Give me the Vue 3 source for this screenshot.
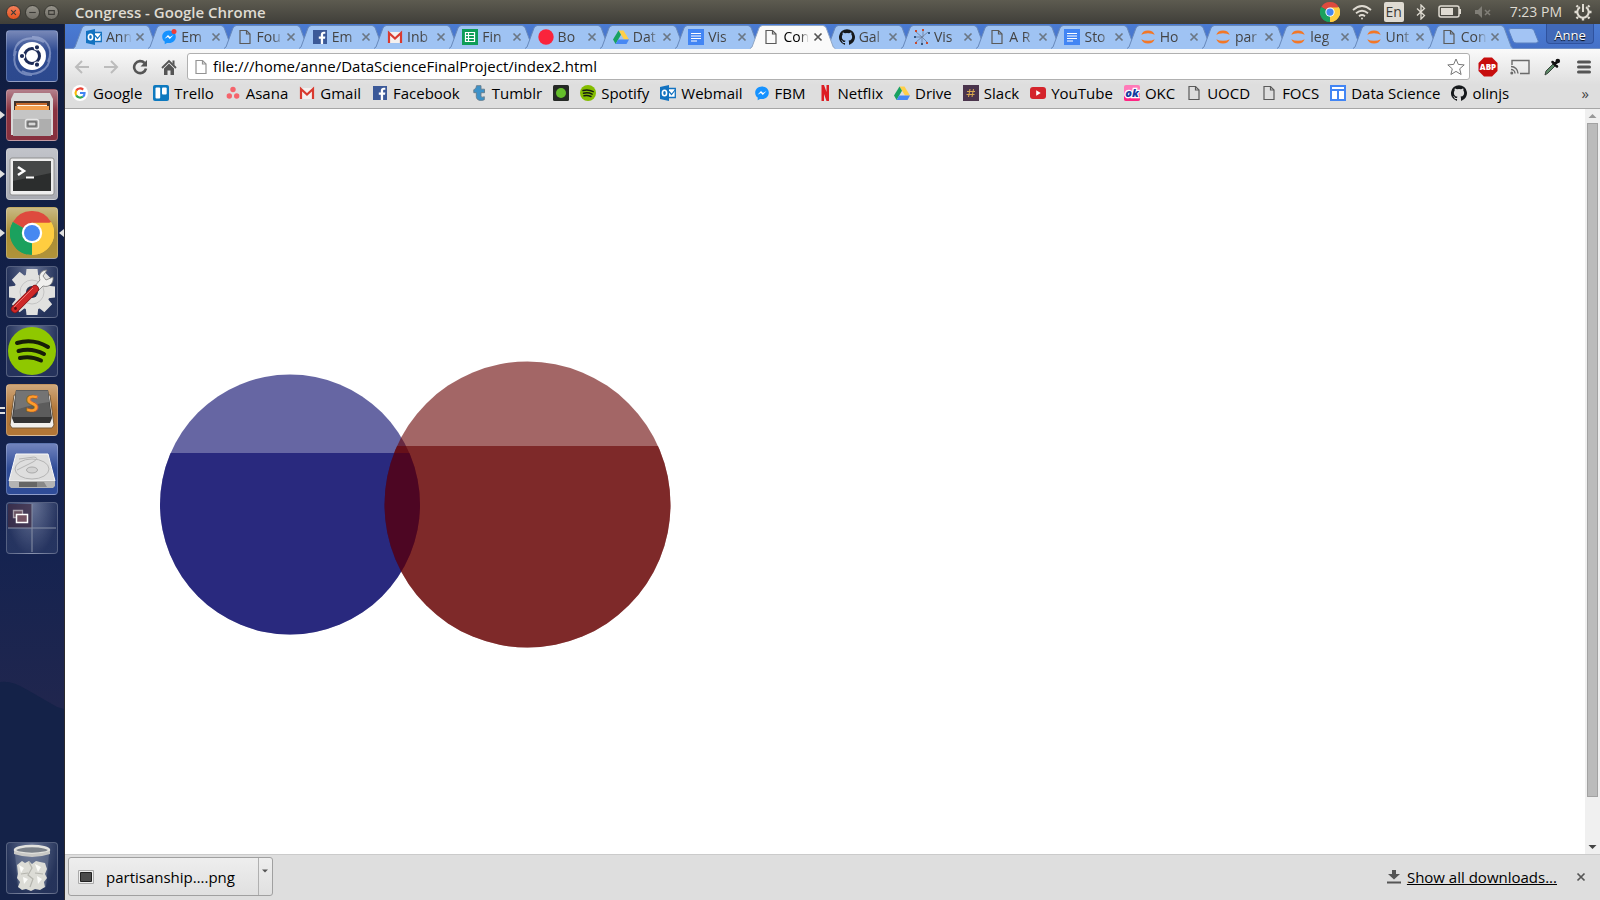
<script setup>
import { ref } from 'vue'

const page = '<path d="M3 1.5h6.500l3.500 3.500v9.500h-10z" fill="none" stroke="#5a5a5a" stroke-width="1.200"/><path d="M9.500 1.500v3.500h3.500" fill="none" stroke="#5a5a5a" stroke-width="1.200"/>'
const github = '<path fill="#16191c" d="M8 .2a8 8 0 0 0-2.530 15.600c.4.070.55-.18.55-.39v-1.500c-2.230.49-2.700-.95-2.700-.95-.36-.93-.89-1.170-.89-1.170-.73-.5.060-.49.060-.49.800.060 1.230.830 1.230.83.710 1.220 1.870.870 2.330.66.070-.52.280-.87.500-1.070-1.770-.2-3.640-.89-3.640-3.950 0-.87.310-1.590.82-2.150-.08-.2-.36-1.010.080-2.120 0 0 .67-.210 2.200.82a7.600 7.600 0 0 1 4 0c1.530-1.030 2.200-.82 2.200-.82.440 1.110.160 1.920.080 2.120.51.560.82 1.280.82 2.150 0 3.070-1.870 3.750-3.650 3.950.290.250.540.730.54 1.480v2.200c0 .21.150.460.55.38A8 8 0 0 0 8 .2z"/>'
const gmail = '<path d="M1 3h14v11h-14z" fill="#f4f0ef"/><path d="M2 14v-10l6 5.500 6-5.500v10" fill="none" stroke="#d93a2f" stroke-width="2.200"/>'
const facebook = '<rect x="1" y="1" width="14" height="14" fill="#3b5998"/><path d="M8.800 15v-5.300h-2v-2.200h2v-1.700c0-2 1.200-3 3-3h1.500v2h-1c-1 0-1.200.5-1.200 1.200v1.500h2.200l-.3 2.200h-1.900v5.300z" fill="#fff"/>'
const outlook = '<path d="M8 3.500h7.300v9h-7.300z" fill="#fff" stroke="#1272c0" stroke-width="1.300"/><path d="M9 6.500l2.500 3 4-5" fill="none" stroke="#1272c0" stroke-width="1.200"/><path d="M0 2l9-2v16l-9-2z" fill="#1272c0"/><ellipse cx="4.500" cy="8" rx="2.100" ry="2.800" fill="none" stroke="#fff" stroke-width="1.600"/>'
const messenger = '<path d="M8 1.500c-4 0-6.800 2.800-6.800 6.200 0 2 .9 3.700 2.500 4.900v2.600l2.300-1.300c.6.100 1.300.2 2 .2 4 0 6.800-2.800 6.800-6.300s-2.800-6.300-6.800-6.300z" fill="#1592ff"/><path d="M3.500 9.700l3.500-3.700 2 1.900 3.500-1.900-3.700 3.900-1.900-1.900z" fill="#fff"/>'
const drive = '<path d="M5.500 1.500h5l5.500 9h-5z" fill="#ffcf48"/><path d="M5.500 1.500l2.500 4.300-5.400 9.200-2.600-4.500z" fill="#18a261"/><path d="M5.200 10.500h10.800l-2.500 4.500h-10.900z" fill="#4688f4"/>'
const docs = '<rect width="16" height="16" fill="#4285f4"/><path d="M3 4.500h10M3 7h10M3 9.500h10M3 12h6" stroke="#fff" stroke-width="1.200"/>'
const jupyter = '<path d="M1.300 5.800a7 6 0 0 1 13.400 0 8.500 4 0 0 0-13.400 0zM1.300 10.300a7 6 0 0 0 13.400 0 8.500 4 0 0 1-13.400 0z" fill="#f37726"/>'
const spotify = '<circle cx="8" cy="8" r="8" fill="#84bd00"/><path d="M3 5.500c3.500-1 7-.6 10.200 1.100M3.500 8.200c3-.8 5.800-.5 8.600.9M4 10.700c2.500-.6 4.800-.3 7 .8" fill="none" stroke="#161e10" stroke-width="1.500" stroke-linecap="round"/>'
const chrome = '<path d="M8 8L1.070 4A8 8 0 0 1 14.930 4z" fill="#de4a3e"/><path d="M8 8L14.930 4A8 8 0 0 1 8 16z" fill="#ffcd40"/><path d="M8 8V16A8 8 0 0 1 1.070 4z" fill="#1ba15e"/><path d="M8 4.300h7.100a8 8 0 0 1 .2 7l-4-1.400z" fill="#ffcd40"/><path d="M1.070 4l3.700 6 3.300 1.700-1.900 4.100a8 8 0 0 1-5.100-11.800z" fill="#1ba15e"/><path d="M11.300 9.500l-3.400 6.500a8 8 0 0 0 8-6.500z" fill="#ffcd40"/><circle cx="8" cy="8" r="3.700" fill="#fff"/><circle cx="8" cy="8" r="2.900" fill="#4688f1"/>'

const icons = {
  page, github, gmail, facebook, outlook, messenger, drive, docs, jupyter, spotify, chrome,
  messengerNew: messenger + '<circle cx="13" cy="2.500" r="2.500" fill="#f03d35"/>',
  sheets: '<rect width="16" height="16" fill="#0f9d58"/><path d="M3.500 3.500h9v9h-9zM3.500 6.500h9M3.500 9.500h9M6.500 3.500v9" fill="none" stroke="#fff" stroke-width="1.200"/>',
  red: '<circle cx="8" cy="8" r="7.700" fill="#fa243c"/>',
  network: '<path d="M8 8L2 3M8 8l6-5M8 8l-6 5M8 8l5 5M9 8V1M8 8v6M8 8H1" stroke="#66738c" stroke-width=".7"/><g fill="#c8492d"><path d="M1 1h2v2H1zM8 0h2v2H8zM1 13h2v2H1zM12 13h2v2h-2z"/></g><g fill="#36577f"><path d="M14 3h2v2h-2zM7 14h2v2H7zM0 7h2v2H0z"/></g>',
  google: '<circle cx="8" cy="8" r="8" fill="#fff"/><g fill="none" stroke-width="2.100"><path d="M4.200 5.600a4.600 4.600 0 0 1 7-1" stroke="#ea4335"/><path d="M4.200 5.600a4.800 4.800 0 0 0 0 4.800" stroke="#fbbc05"/><path d="M4.200 10.400a4.600 4.600 0 0 0 6.700 1.300" stroke="#34a853"/><path d="M8 8h4.600a4.600 4.600 0 0 1-1.700 3.700" stroke="#4285f4"/></g>',
  trello: '<rect width="16" height="16" rx="2" fill="#0d79bf"/><rect x="2.500" y="2.500" width="4.700" height="11" rx="1" fill="#fff"/><rect x="9" y="2.500" width="4.700" height="7" rx="1" fill="#fff"/>',
  asana: '<g fill="#f5646c"><circle cx="8" cy="4.500" r="2.700"/><circle cx="4.300" cy="11" r="2.700"/><circle cx="11.700" cy="11" r="2.700"/></g>',
  tumblr: '<path d="M5.500.7h4.500v3.500h3.500v3.500h-3.500v3c0 1.800 1.500 1.800 3.300 1v3c-3.300 1.500-8 .8-8-3.200v-3.800h-2.500v-3c1.700-.7 2.500-1.800 2.700-4z" fill="#3d92c9" stroke="#617b8c" stroke-width=".9"/>',
  green: '<rect width="16" height="16" rx="1.500" fill="#252925"/><circle cx="8" cy="8" r="5" fill="#64be2a"/>',
  netflix: '<path d="M4.500 0h2.500l2.500 7V0H12v16H9.500L7 9v7H4.500z" fill="#dd1d23"/>',
  slack: '<rect width="16" height="16" fill="#4a344c"/><path d="M7 4l-1.500 8M10.500 4l-1.500 8M4 6.500h8M3.500 9.500h8" stroke="#d8a84f" stroke-width="1"/>',
  youtube: '<rect y="2" width="16" height="12" rx="3" fill="#d4232b"/><path d="M6.200 5.200l4.500 2.800-4.500 2.800z" fill="#fff"/>',
  okc: '<rect width="16" height="16" rx="2" fill="#ff7ab8"/><path d="M0 11h16v3a2 2 0 0 1-2 2H2a2 2 0 0 1-2-2z" fill="#ff2583"/><text x="8" y="12" text-anchor="middle" font-family="Open Sans" font-size="11" font-style="italic" font-weight="800" fill="#173da0" stroke="#fff" stroke-width="2.500" paint-order="stroke">ok</text>',
  table: '<rect width="16" height="16" fill="#4285f4"/><path d="M2 2h12v2H2zM2 6h5v8H2zM9 6h5v8H9z" fill="#fff"/>',
}

const tabs = [
  ['outlook', 'Ann'], ['messengerNew', 'Em'], ['page', 'Fou'], ['facebook', 'Em'], ['gmail', 'Inb'],
  ['sheets', 'Fin'], ['red', 'Bo'], ['drive', 'Dat'], ['docs', 'Vis'], ['page', 'Con'],
  ['github', 'Gal'], ['network', 'Vis'], ['page', 'A R'], ['docs', 'Sto'], ['jupyter', 'Ho'],
  ['jupyter', 'par'], ['jupyter', 'leg'], ['jupyter', 'Unt'], ['page', 'Con'],
]
const activeTab = ref(9)

const bookmarks = [
  ['google', 'Google'], ['trello', 'Trello'], ['asana', 'Asana'], ['gmail', 'Gmail'], ['facebook', 'Facebook'],
  ['tumblr', 'Tumblr'], ['green', ''], ['spotify', 'Spotify'], ['outlook', 'Webmail'], ['messenger', 'FBM'],
  ['netflix', 'Netflix'], ['drive', 'Drive'], ['slack', 'Slack'], ['youtube', 'YouTube'], ['okc', 'OKC'],
  ['page', 'UOCD'], ['page', 'FOCS'], ['table', 'Data Science'], ['github', 'olinjs'],
]

const cogTooth = 'M20.500 3h11l1 9H19.500zM20.500 49h11l1-9H19.500z'
const art = {
  dash: '<g fill="none" stroke="#b9c6e8" opacity=".5"><path d="M8 26C8 10 22 4 38 12M44 26c0 15-16 22-28 15M26 7c14-1 22 12 16 25M26 45C12 46 5 34 10 21" stroke-width="2"/></g><circle cx="26" cy="26" r="14" fill="#fff"/><circle cx="26" cy="26" r="7.500" fill="none" stroke="#1c2b57" stroke-width="3"/><g fill="#1c2b57" stroke="#fff" stroke-width="1.200"><circle cx="16" cy="26" r="2.700"/><circle cx="31" cy="17.300" r="2.700"/><circle cx="31" cy="34.700" r="2.700"/></g>',
  files: '<path d="M8 4h36l3 6v36H5V10z" fill="#d9d9d9"/><path d="M8 12h36v12H8z" fill="#40332c"/><path d="M10 14h31v8H10z" fill="#c56a2c"/><path d="M9 17h34v7H9z" fill="#f3a04f"/><path d="M11 16.500h30" stroke="#fff4e6"/><path d="M7 21h38v26H7z" fill="#aeaeae"/><path d="M7 21h38v9H7z" fill="#c5c5c5"/><rect x="19.500" y="30.500" width="13" height="9" rx="2" fill="#999" stroke="#e6e6e6" stroke-width="1.500"/><rect x="22" y="33" width="8" height="4" fill="#d8d8d8" stroke="#555"/>',
  terminal: '<rect x="4" y="10" width="44" height="37" rx="2" fill="#eee" stroke="#8e8e8e"/><rect x="7" y="13" width="38" height="30" fill="#2b2d2d"/><path d="M7 13h38v12l-38 8z" fill="#454747"/><path d="M12 19l6 4-6 4" fill="none" stroke="#fff" stroke-width="2.500"/><path d="M20 29.500h8" stroke="#fff" stroke-width="2"/>',
  chrome: '<svg x="4" y="4" width="44" height="44" viewBox="0 0 16 16">' + chrome + '</svg>',
  settings: `<g fill="#e1e1df"><circle cx="26" cy="26" r="18"/><path d="${cogTooth}"/><path d="${cogTooth}" transform="rotate(45 26 26)"/><path d="${cogTooth}" transform="rotate(90 26 26)"/><path d="${cogTooth}" transform="rotate(135 26 26)"/></g><circle cx="26" cy="26" r="12" fill="none" stroke="#c4c4c4"/><circle cx="26" cy="26" r="6" fill="#273354"/><path d="M28 21l6-7c-2-5 1-10 7-10l-4 6 3 4 7-3c1 6-4 11-10 9l-6 6z" fill="#f0f0ee" stroke="#777" stroke-width=".8"/><path d="M9 43L29 23" stroke="#861616" stroke-width="8" stroke-linecap="round"/><path d="M9 43L29 23" stroke="#ce2828" stroke-width="6.500" stroke-linecap="round"/><path d="M8 41L27 22" stroke="#ed7771" stroke-width="1"/><circle cx="9.500" cy="42.500" r="1.400" fill="#5b0e0e"/>`,
  spotify: '<circle cx="26" cy="26" r="24" fill="#8fc800"/><path d="M11 18c10-3 21-2 31 4M12.500 26c9-2.500 17-1.500 25.500 3M14 33c7-1.500 14-1 21 2.500" fill="none" stroke="#171e08" stroke-width="4" stroke-linecap="round"/>',
  sublime: '<path d="M8 11h36l4 30-2 3H6l-2-3z" fill="#f1efec" stroke="#775a38"/><path d="M10 6h32l4 28-2 5H8l-2-5z" fill="#333"/><path d="M10 6h32l3 27H7z" fill="#5c5c5c"/><path d="M10 7h32l1 11q-15 2-34 8z" fill="#747474"/><text x="26" y="28" text-anchor="middle" font-family="Open Sans" font-size="24" font-weight="700" fill="#ff9b2c" stroke="#9b5518" stroke-width=".5">S</text>',
  disk: '<path d="M10 11h32l7 27H3z" fill="#dedede" stroke="#fafafa"/><path d="M3 38h46v5l-2 2H5l-2-2z" fill="#b4b4b4"/><path d="M13 39h18v5H13z" fill="#666"/><path d="M31 39h7l3 5H31z" fill="#888"/><ellipse cx="26" cy="26" rx="17" ry="10" fill="none" stroke="#b5b5b5"/><ellipse cx="26" cy="27" rx="5.500" ry="3" fill="#d2d2d2" stroke="#aaa"/><path d="M13 16l15-2q6 1-1 5l-16 8" fill="none" stroke="#b5b5b5"/>',
  workspaces: '<path d="M2 2h24v24H2z" fill="#3d2a42" opacity=".7"/><path d="M26 2v48M2 26h48" stroke="#8790a6" stroke-width="1"/><path d="M7.500 8.500h9v7h-9z" fill="#69505f" stroke="#a9a0ab" stroke-width="1.300"/><path d="M10.500 12.500h11v8h-11z" fill="#755363" stroke="#fff" stroke-width="1.500"/>',
  trash: '<path d="M9 12h34l-3 33q-14 5-28 0z" fill="#8f9ab0" opacity=".35"/><g fill="#dcdcd6"><path d="M11 23l5-4 3 2 4-2 3 3 4-3 4 1 5 1 2 6-2 5 2 4-3 4 1 5-5 3-5-1-4 2-5-2-4 1-4-3 2-5-3-4 1-4z"/></g><path d="M13 23l5 3-3 5zM29 22l6 3-3 5zM17 35l5 2-4 5zM31 34l5 3-4 5z" fill="#fbfbf8"/><path d="M23 20l3 6-4 7 5 4-3 8M15 32l7-1M29 31l8 1" fill="none" stroke="#b5b5ae" stroke-width="1.200"/><ellipse cx="26" cy="8" rx="17" ry="4" fill="#7b8189" stroke="#e2e2de" stroke-width="2.500"/><path d="M8 9v3q18 6 36 0V9q-18 6-36 0z" fill="#c9c9c6"/>',
}
const launcher = [
  { id: 'dash', label: 'Dash' },
  { id: 'files', label: 'Files', open: 1 },
  { id: 'terminal', label: 'Terminal', open: 1 },
  { id: 'chrome', label: 'Google Chrome', open: 1, focused: true },
  { id: 'settings', label: 'System Tools' },
  { id: 'spotify', label: 'Spotify' },
  { id: 'sublime', label: 'Sublime Text', open: 2 },
  { id: 'disk', label: 'Disk' },
  { id: 'workspaces', label: 'Workspaces' },
  { id: 'trash', label: 'Trash' },
]

const address = ref('file:///home/anne/DataScienceFinalProject/index2.html')
</script>

<template>
  <div class="desktop">
    <header class="panel">
      <div class="window-buttons">
        <button class="win close" aria-label="Close"><svg viewBox="0 0 14 14"><path d="M4.500 4.500l5 5M9.500 4.500l-5 5" /></svg></button>
        <button class="win" aria-label="Minimize"><svg viewBox="0 0 14 14"><path d="M3.500 7h7" /></svg></button>
        <button class="win" aria-label="Maximize"><svg viewBox="0 0 14 14"><path d="M4 5h6v4H4z" /></svg></button>
      </div>
      <h1 class="window-title">Congress - Google Chrome</h1>
      <div class="indicators">
        <svg class="i20" viewBox="0 0 16 16" v-html="icons.chrome"></svg>
        <svg class="i20" viewBox="0 0 20 20" fill="none" stroke="#dfdbd2" stroke-width="1.800"><path d="M1 8q9-8 18 0M4 11.200q6-5 12 0M7 14.200q3-2.500 6 0" /><circle cx="10" cy="16.500" r="1" fill="#dfdbd2" stroke="none" /></svg>
        <span class="lang">En</span>
        <svg class="bt" viewBox="0 0 10 16" fill="none" stroke="#dfdbd2" stroke-width="1.300"><path d="M1 4.500l7.500 7L5 15V1l3.500 3.500-7.500 7" /></svg>
        <svg class="battery" viewBox="0 0 24 14"><rect x="1" y="1" width="20" height="11" rx="2" fill="none" stroke="#dfdbd2" stroke-width="1.500" /><path d="M3 3h12v7H3z" fill="#dfdbd2" /><path d="M22 4v5" stroke="#dfdbd2" stroke-width="2" /></svg>
        <svg class="mute" viewBox="0 0 18 14"><path d="M1 5h3l4-4v12L4 9H1z" fill="#807e77" /><path d="M11 5l5 5M16 5l-5 5" stroke="#807e77" stroke-width="1.500" /></svg>
        <time class="clock">7:23 PM</time>
        <svg class="gear" viewBox="0 0 18 18" fill="none" stroke="#dfdbd2"><path d="M6 4.200a5.700 5.700 0 1 0 6 0" stroke-width="2" /><path d="M9 1v8" stroke-width="2" /><path d="M4 4L2.500 2.500M14 4l1.500-1.500M.5 9H3M15 9h2.500M4 14l-1.500 1.500M14 14l1.500 1.500M9 15v2.500" stroke-width="2.400" /></svg>
      </div>
    </header>

    <div class="body">
      <nav class="launcher" aria-label="Launcher">
        <svg class="hills" viewBox="0 0 65 220" preserveAspectRatio="none"><path d="M0 2q12-2 28 8l30 17 7 2v191H0z" fill="#142248" /></svg>
        <button v-for="item in launcher" :key="item.id" class="tile" :class="item.id" :aria-label="item.label">
          <svg viewBox="0 0 52 52" v-html="art[item.id]"></svg>
          <i v-if="item.open === 1" class="pip"></i>
          <i v-if="item.open === 2" class="bars"></i>
          <i v-if="item.focused" class="pip right"></i>
        </button>
      </nav>

      <section class="browser">
        <div class="strip">
          <div class="tabs" role="tablist">
            <div v-for="(tab, i) in tabs" :key="i" class="tab" :class="{ active: i === activeTab }">
              <svg class="shape" viewBox="0 0 85 24" preserveAspectRatio="none">
                <path class="fill" d="M0 24L2 22 9 3Q10 1 12 1H73Q75 1 76 3L83 22 85 24z" />
                <path class="edge" d="M0 23.500L2 22 9 3Q10 .5 12 .5H73Q75 .5 76 3L83 22 85 23.500" />
              </svg>
              <button class="tab-main" role="tab" :aria-selected="i === activeTab" @click="activeTab = i">
                <svg class="i16" viewBox="0 0 16 16" v-html="icons[tab[0]]"></svg>
                <span class="tab-text">{{ tab[1] }}</span>
              </button>
              <button class="x" aria-label="Close tab"><svg viewBox="0 0 10 10"><path d="M1.500 1.500l7 7M8.500 1.500l-7 7" /></svg></button>
            </div>
          </div>
          <button class="new-tab" aria-label="New tab"><svg viewBox="0 0 32 16"><path d="M1 3q-1-2.500 2-2.500h20q2 0 3 2l4 10q1 2.500-2 2.500H8q-2 0-3-2z" fill="#a3c4f4" stroke="#5a80c0" /></svg></button>
          <button class="profile">Anne</button>
        </div>

        <div class="chrome">
          <form class="toolbar" @submit.prevent>
            <div class="tools">
              <button aria-label="Back"><svg class="i16" viewBox="0 0 16 16" fill="none" stroke="#bcbcbc" stroke-width="2"><path d="M15 8H2M8 2L2 8l6 6" /></svg></button>
              <button aria-label="Forward"><svg class="i16" viewBox="0 0 16 16" fill="none" stroke="#bcbcbc" stroke-width="2"><path d="M1 8h13M8 2l6 6-6 6" /></svg></button>
              <button aria-label="Reload"><svg class="i16" viewBox="0 0 16 16"><path d="M12.500 4A6 6 0 1 0 14 9.500" fill="none" stroke="#555" stroke-width="2.600" /><path d="M15 1v6.500H8.500z" fill="#555" /></svg></button>
              <button aria-label="Home"><svg class="i16" viewBox="0 0 16 16"><path d="M1 9l7-7 7 7" fill="none" stroke="#555" stroke-width="1.800" /><path d="M3 9.500l5-5 5 5V16H9.500v-4.500h-3V16H3zM11.500 1.500h2v5l-2-2z" fill="#555" /></svg></button>
            </div>
            <div class="omnibox">
              <svg class="i16 pale" viewBox="0 0 16 16" v-html="icons.page"></svg>
              <input v-model="address" class="address" type="text" aria-label="Address" spellcheck="false" />
              <button class="star" aria-label="Bookmark this page"><svg viewBox="0 0 18 18"><path d="M9 1l2.300 5.400 5.900.5-4.500 3.900 1.400 5.700L9 13.400l-5.100 3.100 1.400-5.700L.8 6.900l5.900-.5z" fill="#fff" stroke="#777" /></svg></button>
            </div>
            <div class="extensions">
              <button aria-label="Adblock Plus"><svg viewBox="0 0 20 20"><path d="M6 .5h8L19.500 6v8L14 19.500H6L.5 14V6z" fill="#c70d0d" /><text x="10" y="13" text-anchor="middle" font-family="Open Sans" font-size="8" font-weight="800" fill="#fff">ABP</text></svg></button>
              <button aria-label="Cast"><svg viewBox="0 0 20 20" fill="none" stroke="#6a6a6a" stroke-width="1.400"><path d="M2 8V3.500h17v13H10M1 9.500a7 7 0 0 1 7 7M1 12.500a4 4 0 0 1 4 4" /><circle cx="1.800" cy="16" r=".8" /></svg></button>
              <button aria-label="Color picker"><svg viewBox="0 0 20 20"><path d="M3 18l1-4 7-7 2 2-7 7z" fill="#5d8a68" stroke="#38443c" /><path d="M10.500 5l4.500 4.500M13 7l3-3" stroke="#111" stroke-width="2.500" stroke-linecap="round" /><circle cx="15.800" cy="4" r="2.300" fill="#111" /></svg></button>
              <button aria-label="Menu"><svg viewBox="0 0 20 20"><path d="M4.500 5h11M4.500 10h11M4.500 15h11" stroke="#555" stroke-width="3" stroke-linecap="round" /></svg></button>
            </div>
          </form>
          <nav class="bookmarks" aria-label="Bookmarks">
            <a v-for="mark in bookmarks" :key="mark[0] + mark[1]" href="#" class="bookmark" :aria-label="mark[1] || 'Bookmark'">
              <svg class="i16" viewBox="0 0 16 16" v-html="icons[mark[0]]"></svg>
              <span v-if="mark[1]">{{ mark[1] }}</span>
            </a>
            <button class="more" aria-label="More bookmarks">»</button>
          </nav>
        </div>

        <main class="viewport">
          <svg class="venn" width="800" height="700" viewBox="0 0 800 700" role="img" aria-label="Venn diagram">
            <defs>
              <clipPath id="lower-blue"><rect x="0" y="344" width="800" height="356" /></clipPath>
              <clipPath id="lower-red"><rect x="0" y="337" width="800" height="363" /></clipPath>
            </defs>
            <circle class="blue" cx="225" cy="395.500" r="130" />
            <circle class="red" cx="462.500" cy="395.500" r="143" />
            <circle class="blue" cx="225" cy="395.500" r="130" clip-path="url(#lower-blue)" />
            <circle class="red" cx="462.500" cy="395.500" r="143" clip-path="url(#lower-red)" />
          </svg>
          <div class="scrollbar">
            <svg viewBox="0 0 15 14"><path d="M3.500 9h8l-4-4z" fill="#999" /></svg>
            <div class="track"><div class="thumb"></div></div>
            <svg viewBox="0 0 15 14"><path d="M3.500 5h8l-4 4z" fill="#444" /></svg>
          </div>
        </main>

        <footer class="downloads">
          <div class="download">
            <button class="file">
              <svg class="i16" viewBox="0 0 16 16"><path d="M.5 1.500h15v13H.5z" fill="#eee" stroke="#aaa" /><path d="M2.500 3.500h11v9h-11z" fill="#4b4b4b" stroke="#222" /></svg>
              <span>partisanship….png</span>
            </button>
            <button class="drop" aria-label="Download options"><svg viewBox="0 0 8 6"><path d="M1 1.500h6l-3 3z" fill="#555" /></svg></button>
          </div>
          <a class="show-all" href="#">
            <svg viewBox="0 0 14 14"><path d="M5 0h4v4h4L7 9.500 1 4h4zM0 11.500h14v2H0z" fill="#555" /></svg>
            <span>Show all downloads...</span>
          </a>
          <button class="dismiss" aria-label="Close downloads bar"><svg viewBox="0 0 10 10"><path d="M1.500 1.500l7 7M8.500 1.500l-7 7" /></svg></button>
        </footer>
      </section>
    </div>
  </div>
</template>

<style>
body { background: #152248; }
</style>

<style scoped>
* { box-sizing: border-box; }
.desktop { display: flex; flex-direction: column; min-height: 100vh; font: 15px/20px "Open Sans", "Noto Sans", sans-serif; color: #000; }
button { padding: 0; border: 0; background: none; font: inherit; color: inherit; display: flex; align-items: center; justify-content: center; }
svg { display: block; flex: none; }
.i16 { width: 16px; height: 16px; }
.i20 { width: 20px; height: 20px; }

.panel { height: 24px; display: flex; align-items: center; padding: 0 8px 0 6px; background: linear-gradient(#5d5b50, #3f3e39); color: #dfdbd2; }
.window-buttons { display: flex; gap: 4px; }
.win { width: 15px; height: 15px; border-radius: 50%; background: linear-gradient(#96938a, #706e67); border: 1px solid #393832; }
.win svg { width: 13px; height: 13px; fill: none; stroke: #3c3b37; stroke-width: 1.200px; }
.win.close { background: linear-gradient(#f4805b, #e2531f); }
.window-title { margin: 0 0 0 16px; font-size: 15px; line-height: 22px; font-weight: 600; flex: 1; }
.indicators { display: flex; align-items: center; gap: 12px; font-size: 14px; }
.lang { width: 20px; height: 20px; border-radius: 2px; background: #dfdbd2; color: #3c3b37; text-align: center; }
.bt { width: 10px; height: 16px; }
.battery { width: 24px; height: 14px; }
.mute { width: 18px; height: 14px; }
.clock { margin-left: 6px; }
.gear { width: 18px; height: 18px; }

.body { flex: 1; display: flex; }
.launcher { position: relative; width: 65px; display: flex; flex-direction: column; gap: 7px; padding: 6px; background: linear-gradient(#101d40, #152350 60%, #20264e 78%); border-right: 1px solid #2c2a2e; }
.hills { position: absolute; left: 0; right: 0; bottom: 0; width: 100%; height: 220px; }
.tile { position: relative; width: 52px; height: 52px; border-radius: 4px; border: 1px solid rgba(255, 255, 255, .22); background: radial-gradient(ellipse at 50% 0, rgba(190, 200, 225, .5), rgba(90, 105, 145, .25) 75%); }
.tile > svg { width: 52px; height: 52px; }
.tile.dash { background: linear-gradient(#7888b8, #2f4b91 40%, #2c498e); }
.tile.files { background: linear-gradient(#b3808c, #8a3340 40%, #86303e); }
.tile.terminal { background: linear-gradient(#c2c4ca, #a9abb2); }
.tile.chrome { background: linear-gradient(#c9b983, #a98d35 50%, #b19339); }
.tile.sublime { background: linear-gradient(#cfa77b, #b27637 50%); }
.tile.disk { background: linear-gradient(#7183bd, #2f4c98 50%); }
.tile.trash { margin-top: auto; }
.pip { position: absolute; left: -7px; top: 21px; border: 4px solid transparent; border-left: 5px solid #e0e0e0; border-right: 0; }
.pip.right { left: auto; right: -7px; border-left: 0; border-right: 5px solid #e0e0e0; }
.bars { position: absolute; left: -7px; top: 22px; width: 5px; height: 7px; border: solid #e0e0e0; border-width: 2px 0; }

.browser { flex: 1; min-width: 0; display: flex; flex-direction: column; }
.strip { height: 25px; display: flex; padding: 0 6px 0 8px; background: linear-gradient(#4a7bd3, #4571c8); border-bottom: 1px solid #6f8fc4; }
.tabs { flex: 1; display: flex; min-width: 0; }
.tab { position: relative; flex: 1; min-width: 0; display: flex; align-items: center; padding: 1px 0 0 13px; }
.shape { position: absolute; left: 0; top: 1px; width: calc(100% + 10px); height: 24px; }
.fill { fill: #9fc3f3; }
.edge { fill: none; stroke: #6889bb; vector-effect: non-scaling-stroke; }
.active { z-index: 2; }
.active .fill { fill: #fafafa; }
.active .edge { stroke: #8fa5c4; }
.tab-main { position: relative; flex: 1; min-width: 0; justify-content: flex-start; gap: 4px; color: #444; font-size: 14px; }
.tab-text { text-align: left; white-space: nowrap; mask-image: linear-gradient(90deg, #000 16px, transparent 26px); }
.active .tab-text { color: #000; }
.x { position: relative; width: 12px; height: 12px; margin-right: 2px; }
.x svg, .dismiss svg { width: 10px; height: 10px; fill: none; stroke: #6b7785; stroke-width: 1.700px; }
.active .x svg, .dismiss svg { stroke: #555; }
.new-tab { width: 32px; margin-left: 5px; }
.new-tab svg { width: 32px; height: 16px; }
.profile { width: 48px; height: 20px; margin-left: 6px; padding-top: 3px; border: 1px solid #2f529e; border-top: 0; border-radius: 0 0 4px 4px; background: #4169b8; color: #fff; font-size: 13px; text-shadow: 0 1px 1px #000; }

.chrome { display: flex; flex-direction: column; background: linear-gradient(#fafafa, #dedede 60%); border-bottom: 1px solid #a6a6a6; }
.toolbar { display: flex; align-items: center; padding: 4px 6px 0 9px; }
.tools { display: flex; gap: 13px; margin-right: 10px; }
.omnibox { flex: 1; height: 27px; display: flex; align-items: center; padding: 0 4px 0 5px; background: #fff; border: 1px solid #b0b0b0; border-radius: 3px; }
.pale { opacity: .65; }
.address { flex: 1; min-width: 0; height: 24px; border: 0; padding: 0 0 2px 4px; outline: 0; background: none; font: inherit; color: #000; }
.star svg { width: 18px; height: 18px; }
.extensions { display: flex; gap: 12px; margin-left: 8px; }
.extensions svg { width: 20px; height: 20px; }
.bookmarks { height: 28px; display: flex; align-items: center; gap: 11px; padding: 0 11px 2px 7px; }
.bookmark { display: flex; align-items: center; gap: 5px; color: #000; text-decoration: none; white-space: nowrap; }
.more { margin-left: auto; color: #444; }

.viewport { flex: 1; display: flex; justify-content: space-between; background: #fff; }
.blue { fill: #006; fill-opacity: .6; }
.red { fill: #600; fill-opacity: .6; }
.scrollbar { width: 15px; display: flex; flex-direction: column; background: #f0f0f0; }
.scrollbar svg { width: 15px; height: 14px; }
.track { flex: 1; padding: 0 2px; }
.thumb { height: 94%; background: #bbb; border: 1px solid #a2a2a2; }

.downloads { height: 46px; display: flex; align-items: center; padding: 0 14px 2px 3px; background: #dedede; border-top: 1px solid #cbcbcb; }
.download { height: 39px; display: flex; border: 1px solid #a0a0a0; border-radius: 3px; background: linear-gradient(#eee, #e0e0e0); }
.file { gap: 12px; padding: 0 23px 0 9px; }
.drop { width: 14px; border-left: 1px solid #b0b0b0; align-items: flex-start; padding-top: 10px; }
.drop svg { width: 8px; height: 6px; }
.show-all { margin-left: auto; display: flex; align-items: center; gap: 6px; color: #000; text-decoration: underline; }
.show-all svg { width: 14px; height: 14px; }
.dismiss { margin-left: 19px; }
</style>
